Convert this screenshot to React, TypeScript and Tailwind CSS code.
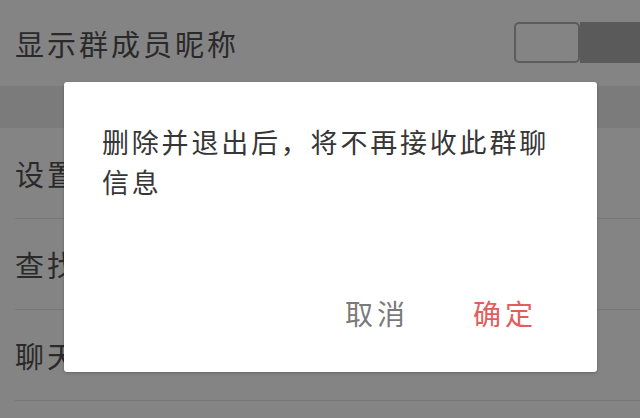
export default function App() {
  const font = { fontFamily: '"Noto Sans CJK SC", "Noto Sans", sans-serif' };

  return (
    <div className="relative h-[418px] w-[640px] overflow-hidden bg-[#848484]" style={font}>
      {/* dimmed settings page */}
      <div className="flex h-[86px] items-center justify-between pl-[15px]">
        <span className="text-[29px] leading-none tracking-[3px] text-[#2a2a2a]">显示群成员昵称</span>
        <div className="mb-[1px] flex h-[41px] w-[126px] self-center">
          <div className="w-[66px] rounded-[5px] border-2 border-[#5c5c5c] bg-[#848484]" />
          <div className="flex-1 bg-[#5a5a5a]" />
        </div>
      </div>
      <div className="h-[42px] bg-[#7b7b7b]" />
      {['设置', '查找', '聊天'].map((t) => (
        <div key={t} className="ml-[15px] flex h-[91px] items-center border-b border-[#777777]">
          <span className="text-[29px] leading-none tracking-[3px] text-[#2a2a2a]">{t}</span>
        </div>
      ))}

      {/* dialog */}
      <div className="absolute left-[64px] top-[82px] flex h-[290px] w-[533px] flex-col rounded-[3px] bg-white shadow-[0_1px_3px_rgba(0,0,0,0.25)]">
        <p className="px-[38px] pt-[40px] text-[27px] leading-[40px] tracking-[2.8px] text-[#363636]">
          删除并退出后，将不再接收此群聊信息
        </p>
        <div className="mt-auto flex justify-end gap-[64px] pb-[39px] pr-[60px]">
          <button className="text-[28px] leading-[40px] tracking-[4px] text-[#7a7a7a]">取消</button>
          <button className="text-[28px] leading-[40px] tracking-[4px] text-[#e25d5d]">确定</button>
        </div>
      </div>
    </div>
  );
}
